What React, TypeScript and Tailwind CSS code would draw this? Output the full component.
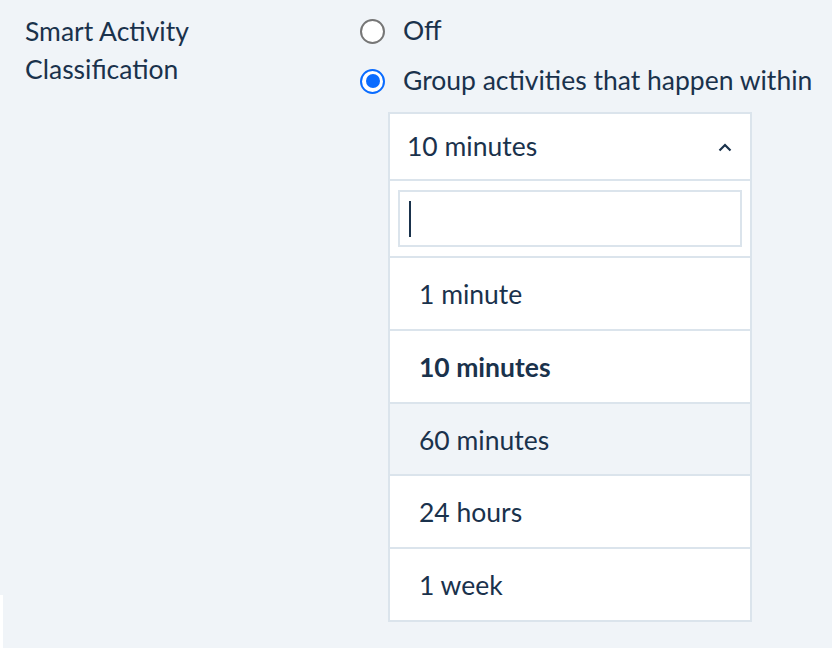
import { useState } from "react";

const options = ["1 minute", "10 minutes", "60 minutes", "24 hours", "1 week"];

function Radio({ checked }: { checked: boolean }) {
  return checked ? (
    <span className="flex h-[25px] w-[25px] shrink-0 items-center justify-center rounded-full border-[2.5px] border-[#0a6cff] bg-white">
      <span className="h-[14px] w-[14px] rounded-full bg-[#0a6cff]" />
    </span>
  ) : (
    <span className="h-[25px] w-[25px] shrink-0 rounded-full border-2 border-[#767676] bg-white" />
  );
}

export default function App() {
  const [selected] = useState("10 minutes");
  const hovered = "60 minutes";

  return (
    <div
      className="relative flex h-[648px] w-[832px] bg-[#f0f4f8] text-[26.5px] text-[#1a324c]"
      style={{ fontFamily: '"Lato", "Noto Sans", sans-serif' }}
    >
      <div className="w-[335px] shrink-0 pl-[25px] pt-[12px] leading-[38px]">
        Smart Activity
        <br />
        Classification
      </div>

      <div className="flex flex-col pl-[25px] pt-[18px]">
        <label className="flex h-[26px] items-center gap-[18px] whitespace-nowrap">
          <Radio checked={false} />
          <span>Off</span>
        </label>
        <label className="mt-[24px] flex h-[26px] items-center gap-[18px] whitespace-nowrap">
          <Radio checked />
          <span>Group activities that happen within</span>
        </label>

        <div className="ml-[28px] mt-[18px] w-[364px]">
          <div className="flex h-[69px] items-center justify-between border-2 border-[#dbe4ec] bg-white pl-[17px] pr-[18px] pt-[1px]">
            <span>{selected}</span>
            <svg width="14" height="9" viewBox="0 0 14 9" fill="none">
              <path d="M1.5 7.5 L7 2 L12.5 7.5" stroke="#1a324c" strokeWidth="2.2" />
            </svg>
          </div>
          <div className="border-x-2 border-b-2 border-[#dbe4ec] bg-white">
            <div className="px-[8px] pb-[9px] pt-[9px]">
              <div className="flex h-[57px] items-center border-2 border-[#dbe4ec] pl-[9px]">
                <span className="h-[36px] w-[2px] bg-[#1a324c]" />
              </div>
            </div>
            {options.map((o) => (
              <div
                key={o}
                className={`flex h-[72.8px] items-center border-t-2 border-[#dbe4ec] pl-[29px] pt-[3px] ${
                  o === hovered ? "bg-[#f0f4f8]" : "bg-white"
                } ${o === selected ? "font-bold" : ""}`}
              >
                {o}
              </div>
            ))}
          </div>
        </div>
      </div>

      <div className="absolute bottom-0 left-0 h-[53px] w-[3px] bg-white" />
    </div>
  );
}
